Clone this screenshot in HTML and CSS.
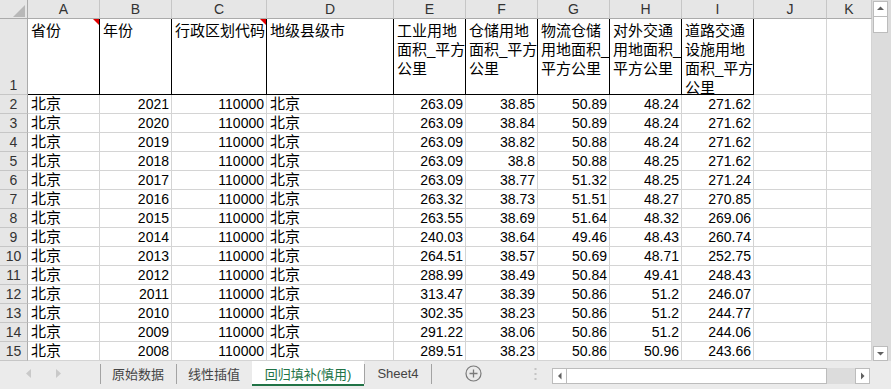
FILE: index.html
```html
<!DOCTYPE html>
<html lang="zh">
<head>
<meta charset="utf-8">
<title>回归填补(慎用)</title>
<link rel="stylesheet" href="styles.css">
</head>
<body>
<div class="app">
  <div class="main">
    <div class="sheet">
      <div class="hd corner"><svg width="27" height="18" viewBox="0 0 27 18"><polygon points="25,5 25,17 13,17" fill="#b8b8b8"/></svg></div>
      <div class="hd">A</div><div class="hd">B</div><div class="hd">C</div><div class="hd">D</div><div class="hd">E</div><div class="hd">F</div><div class="hd">G</div><div class="hd">H</div><div class="hd">I</div><div class="hd">J</div><div class="hd">K</div>

      <div class="rh r1">1</div>
      <div class="c h note">省份</div>
      <div class="c h">年份</div>
      <div class="c h note">行政区划代码</div>
      <div class="c h">地级县级市</div>
      <div class="c h">工业用地<br>面积_平方<br>公里</div>
      <div class="c h">仓储用地<br>面积_平方<br>公里</div>
      <div class="c h">物流仓储<br>用地面积_<br>平方公里</div>
      <div class="c h">对外交通<br>用地面积_<br>平方公里</div>
      <div class="c h">道路交通<br>设施用地<br>面积_平方<br>公里</div>
      <div class="c"></div><div class="c"></div>

      <div class="rh">2</div><div class="c">北京</div><div class="c n">2021</div><div class="c n">110000</div><div class="c">北京</div><div class="c n">263.09</div><div class="c n">38.85</div><div class="c n">50.89</div><div class="c n">48.24</div><div class="c n">271.62</div><div class="c"></div><div class="c"></div>
      <div class="rh">3</div><div class="c">北京</div><div class="c n">2020</div><div class="c n">110000</div><div class="c">北京</div><div class="c n">263.09</div><div class="c n">38.84</div><div class="c n">50.89</div><div class="c n">48.24</div><div class="c n">271.62</div><div class="c"></div><div class="c"></div>
      <div class="rh">4</div><div class="c">北京</div><div class="c n">2019</div><div class="c n">110000</div><div class="c">北京</div><div class="c n">263.09</div><div class="c n">38.82</div><div class="c n">50.88</div><div class="c n">48.24</div><div class="c n">271.62</div><div class="c"></div><div class="c"></div>
      <div class="rh">5</div><div class="c">北京</div><div class="c n">2018</div><div class="c n">110000</div><div class="c">北京</div><div class="c n">263.09</div><div class="c n">38.8</div><div class="c n">50.88</div><div class="c n">48.25</div><div class="c n">271.62</div><div class="c"></div><div class="c"></div>
      <div class="rh">6</div><div class="c">北京</div><div class="c n">2017</div><div class="c n">110000</div><div class="c">北京</div><div class="c n">263.09</div><div class="c n">38.77</div><div class="c n">51.32</div><div class="c n">48.25</div><div class="c n">271.24</div><div class="c"></div><div class="c"></div>
      <div class="rh">7</div><div class="c">北京</div><div class="c n">2016</div><div class="c n">110000</div><div class="c">北京</div><div class="c n">263.32</div><div class="c n">38.73</div><div class="c n">51.51</div><div class="c n">48.27</div><div class="c n">270.85</div><div class="c"></div><div class="c"></div>
      <div class="rh">8</div><div class="c">北京</div><div class="c n">2015</div><div class="c n">110000</div><div class="c">北京</div><div class="c n">263.55</div><div class="c n">38.69</div><div class="c n">51.64</div><div class="c n">48.32</div><div class="c n">269.06</div><div class="c"></div><div class="c"></div>
      <div class="rh">9</div><div class="c">北京</div><div class="c n">2014</div><div class="c n">110000</div><div class="c">北京</div><div class="c n">240.03</div><div class="c n">38.64</div><div class="c n">49.46</div><div class="c n">48.43</div><div class="c n">260.74</div><div class="c"></div><div class="c"></div>
      <div class="rh">10</div><div class="c">北京</div><div class="c n">2013</div><div class="c n">110000</div><div class="c">北京</div><div class="c n">264.51</div><div class="c n">38.57</div><div class="c n">50.69</div><div class="c n">48.71</div><div class="c n">252.75</div><div class="c"></div><div class="c"></div>
      <div class="rh">11</div><div class="c">北京</div><div class="c n">2012</div><div class="c n">110000</div><div class="c">北京</div><div class="c n">288.99</div><div class="c n">38.49</div><div class="c n">50.84</div><div class="c n">49.41</div><div class="c n">248.43</div><div class="c"></div><div class="c"></div>
      <div class="rh">12</div><div class="c">北京</div><div class="c n">2011</div><div class="c n">110000</div><div class="c">北京</div><div class="c n">313.47</div><div class="c n">38.39</div><div class="c n">50.86</div><div class="c n">51.2</div><div class="c n">246.07</div><div class="c"></div><div class="c"></div>
      <div class="rh">13</div><div class="c">北京</div><div class="c n">2010</div><div class="c n">110000</div><div class="c">北京</div><div class="c n">302.35</div><div class="c n">38.23</div><div class="c n">50.86</div><div class="c n">51.2</div><div class="c n">244.77</div><div class="c"></div><div class="c"></div>
      <div class="rh">14</div><div class="c">北京</div><div class="c n">2009</div><div class="c n">110000</div><div class="c">北京</div><div class="c n">291.22</div><div class="c n">38.06</div><div class="c n">50.86</div><div class="c n">51.2</div><div class="c n">244.06</div><div class="c"></div><div class="c"></div>
      <div class="rh">15</div><div class="c">北京</div><div class="c n">2008</div><div class="c n">110000</div><div class="c">北京</div><div class="c n">289.51</div><div class="c n">38.23</div><div class="c n">50.86</div><div class="c n">50.96</div><div class="c n">243.66</div><div class="c"></div><div class="c"></div>
    </div>
    <div class="vscroll">
      <div class="sbtn"><svg width="13" height="14" viewBox="0 0 13 14"><polygon points="3,8 10,8 6.5,4.5" fill="#606060"/></svg></div>
      <div class="vthumb"></div>
      <div class="sbtn down"><svg width="13" height="13" viewBox="0 0 13 13"><polygon points="3,5 10,5 6.5,8.5" fill="#606060"/></svg></div>
    </div>
  </div>
  <div class="tabbar">
    <div class="nav"><svg width="100" height="25" viewBox="0 0 100 25"><polygon points="26,12.5 31,8 31,17" fill="#c9c9c9"/><polygon points="61,12.5 56,8 56,17" fill="#c9c9c9"/></svg></div>
    <div class="tab w76">原始数据</div>
    <div class="tab w76">线性插值</div>
    <div class="tab active">回归填补(慎用)</div>
    <div class="tab w68 last">Sheet4</div>
    <div class="add"><svg width="17" height="17" viewBox="0 0 17 17"><circle cx="8.5" cy="8.5" r="7.5" fill="none" stroke="#7a7a7a" stroke-width="1.2"/><path d="M8.5 4.5v8M4.5 8.5h8" stroke="#7a7a7a" stroke-width="1.3"/></svg></div>
    <div class="dots"><svg width="3" height="25" viewBox="0 0 3 25"><rect x="0.5" y="7" width="2" height="2" fill="#c4c4c4"/><rect x="0.5" y="12" width="2" height="2" fill="#c4c4c4"/><rect x="0.5" y="17" width="2" height="2" fill="#c4c4c4"/></svg></div>
    <div class="hscroll">
      <div class="hbtn"><svg width="13" height="14" viewBox="0 0 13 14"><polygon points="5,7 8.5,3.5 8.5,10.5" fill="#606060"/></svg></div>
      <div class="hthumb"></div>
      <div class="htrack"></div>
      <div class="hbtn"><svg width="13" height="14" viewBox="0 0 13 14"><polygon points="8.5,7 5,3.5 5,10.5" fill="#606060"/></svg></div>
    </div>
  </div>
</div>
</body>
</html>
```

FILE: styles.css
```css
* { box-sizing: border-box; margin: 0; padding: 0; }
html, body { width: 891px; height: 389px; overflow: hidden; }
body {
  background: #ebebeb;
  font-family: "Liberation Sans", "Noto Sans CJK SC", sans-serif;
  color: #000;
}
.app { display: flex; flex-direction: column; height: 389px; }
.main { display: flex; height: 361px; }

.sheet {
  display: grid;
  grid-template-columns: 28px 72px 72px 95px 127px 72px 72px 72px 72px 72px 73px 45px;
  grid-template-rows: 19px 76px repeat(14, 19px);
  width: 872px;
  height: 361px;
  background: #fff;
}
.hd {
  background: #e6e6e6;
  border-right: 1px solid #c6c6c6;
  border-bottom: 1px solid #ababab;
  font-size: 14px;
  line-height: 18px;
  color: #333;
  text-align: center;
}
.corner { border-right-color: #ababab; }
.corner svg { display: block; }
.rh {
  background: #e6e6e6;
  border-right: 1px solid #ababab;
  border-bottom: 1px solid #c6c6c6;
  font-size: 14px;
  line-height: 18px;
  color: #333;
  text-align: center;
}
.r1 { display: flex; align-items: flex-end; justify-content: center; padding-bottom: 0; }
.c {
  border-right: 1px solid #d4d4d4;
  border-bottom: 1px solid #d4d4d4;
  font-size: 15px;
  line-height: 18px;
  padding: 0 3px;
  white-space: nowrap;
  overflow: hidden;
}
.n { text-align: right; font-size: 14px; padding-right: 2px; }
.h {
  border-right-color: #000;
  border-bottom-color: #000;
  line-height: 19px;
  padding-top: 2px;
  padding-left: 3px;
  position: relative;
}
.note::after {
  content: "";
  position: absolute;
  top: 0;
  right: 0;
  border-top: 6px solid #e00000;
  border-left: 6px solid transparent;
}

.vscroll {
  width: 19px;
  background: #dcdcdc;
  display: flex;
  flex-direction: column;
  padding: 1px 3px 0 1px;
}
.sbtn {
  height: 16px;
  background: #fff;
  border: 1px solid #bcbcbc;
  display: flex;
  align-items: center;
  justify-content: center;
}
.sbtn.down { margin-top: auto; height: 15px; }
.vthumb {
  height: 17px;
  margin-top: -1px;
  background: #fff;
  border: 1px solid #bcbcbc;
}

.tabbar {
  height: 28px;
  display: flex;
  align-items: flex-start;
  background: #ebebeb;
}
.nav { width: 100px; height: 25px; }
.nav svg { display: block; }
.tab {
  position: relative;
  height: 25px;
  display: flex;
  align-items: center;
  justify-content: center;
  font-size: 13px;
  color: #444;
  white-space: nowrap;
}
.tab::before {
  content: "";
  position: absolute;
  left: 0;
  top: 3px;
  width: 1px;
  height: 20px;
  background: #a3a3a3;
}
.tab.last::after {
  content: "";
  position: absolute;
  right: 0;
  top: 3px;
  width: 1px;
  height: 20px;
  background: #a3a3a3;
}
.w76 { width: 76px; }
.w68 { width: 68px; }
.tab.active {
  width: 112px;
  background: #fff;
  color: #217346;
  border-bottom: 2px solid #217346;
  padding-top: 1px;
}
.tab.active::before { display: none; }
.add {
  margin-left: 33px;
  height: 25px;
  display: flex;
  align-items: center;
}
.dots { margin-left: 52px; height: 25px; }
.dots svg { display: block; }
.hscroll {
  margin-left: 15px;
  margin-top: 7px;
  width: 318px;
  height: 16px;
  display: flex;
  background: #dcdcdc;
}
.hbtn {
  width: 15px;
  height: 16px;
  background: #fff;
  border: 1px solid #bcbcbc;
  display: flex;
  align-items: center;
  justify-content: center;
}
.hthumb {
  width: 261px;
  margin-left: -1px;
  background: #fff;
  border: 1px solid #bcbcbc;
}
.htrack { flex: 1; }
```
